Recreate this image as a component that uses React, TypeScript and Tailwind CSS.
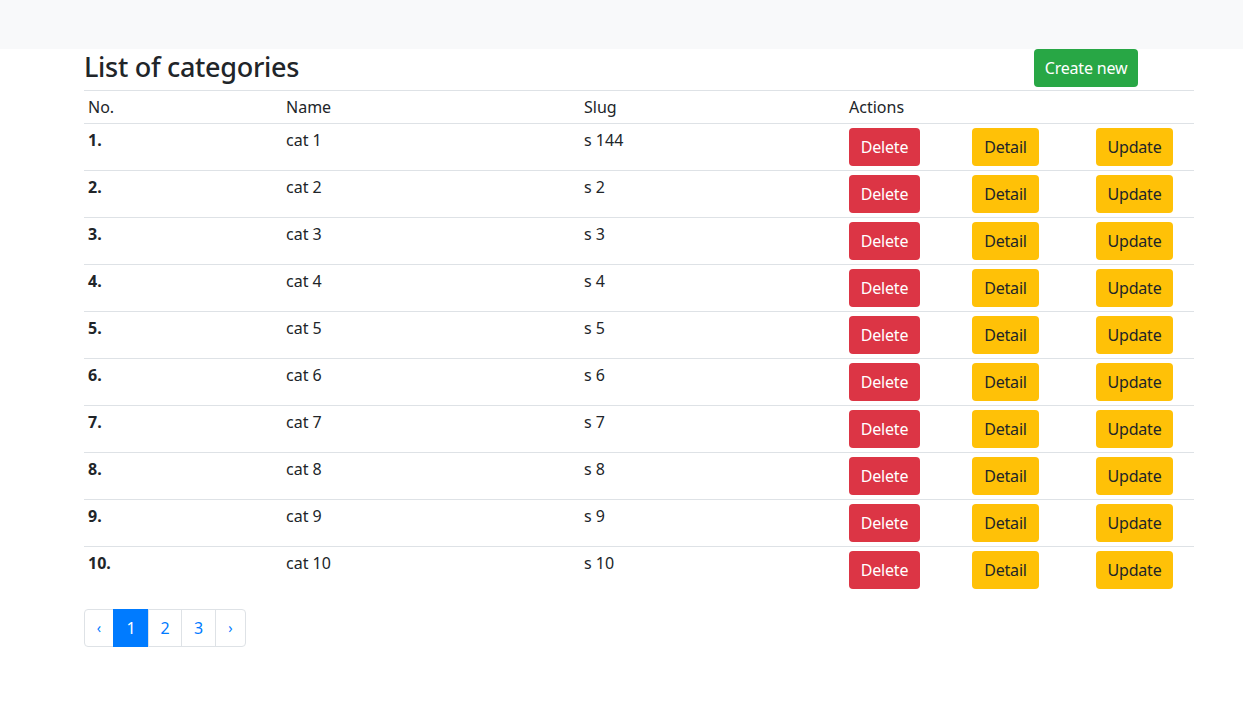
import React from 'react';

const rows = [
  { no: 1, name: 'cat 1', slug: 's 144' },
  { no: 2, name: 'cat 2', slug: 's 2' },
  { no: 3, name: 'cat 3', slug: 's 3' },
  { no: 4, name: 'cat 4', slug: 's 4' },
  { no: 5, name: 'cat 5', slug: 's 5' },
  { no: 6, name: 'cat 6', slug: 's 6' },
  { no: 7, name: 'cat 7', slug: 's 7' },
  { no: 8, name: 'cat 8', slug: 's 8' },
  { no: 9, name: 'cat 9', slug: 's 9' },
  { no: 10, name: 'cat 10', slug: 's 10' },
];

const btn = 'h-[38px] rounded-[4px] text-center text-base leading-6 tracking-[-0.2px]';

const App: React.FC = () => {
  return (
    <div className="min-h-screen bg-white text-[#212529] font-['Noto_Sans',sans-serif] text-base leading-6">
      <nav className="h-[49px] bg-[#f8f9fa]"></nav>
      <div className="ml-[84px] w-[1110px]">
        <div className="flex h-[41px] items-start justify-between">
          <h3 className="mt-[1px] text-[27px] font-medium leading-[34px] tracking-[-0.3px]">List of categories</h3>
          <button className={`${btn} mr-[56px] w-[104px] bg-[#28a745] text-white`}>Create new</button>
        </div>
        <table className="w-full table-fixed border-collapse">
          <colgroup>
            <col className="w-[198px]" />
            <col className="w-[298px]" />
            <col className="w-[265px]" />
            <col className="w-[123px]" />
            <col className="w-[124px]" />
            <col className="w-[102px]" />
          </colgroup>
          <thead>
            <tr className="border-t border-b border-[#dee2e6]">
              <th className="p-1 text-left font-normal">No.</th>
              <th className="p-1 text-left font-normal">Name</th>
              <th className="p-1 text-left font-normal">Slug</th>
              <th className="p-1 text-left font-normal" colSpan={3}>Actions</th>
            </tr>
          </thead>
          <tbody>
            {rows.map((r, i) => (
              <tr key={r.no} className={i > 0 ? 'border-t border-[#dee2e6]' : ''}>
                <td className="p-1 align-top font-bold">{r.no}.</td>
                <td className="p-1 align-top">{r.name}</td>
                <td className="p-1 align-top">{r.slug}</td>
                <td className="p-1 align-top">
                  <button className={`${btn} w-[71px] bg-[#dc3545] text-white`}>Delete</button>
                </td>
                <td className="p-1 align-top">
                  <button className={`${btn} w-[67px] bg-[#ffc107] text-[#212529]`}>Detail</button>
                </td>
                <td className="p-1 align-top">
                  <button className={`${btn} w-[77px] bg-[#ffc107] text-[#212529]`}>Update</button>
                </td>
              </tr>
            ))}
          </tbody>
        </table>
        <ul className="mt-4 flex h-[38px] w-fit text-[#007bff]">
          <li className="flex w-[30px] items-center justify-center rounded-l-[4px] border border-[#dee2e6] text-sm">‹</li>
          <li className="-ml-px flex w-[36px] items-center justify-center border border-[#007bff] bg-[#007bff] text-white">1</li>
          <li className="-ml-px flex w-[34px] items-center justify-center border border-[#dee2e6]">2</li>
          <li className="-ml-px flex w-[35px] items-center justify-center border border-[#dee2e6]">3</li>
          <li className="-ml-px flex w-[31px] items-center justify-center rounded-r-[4px] border border-[#dee2e6] text-sm">›</li>
        </ul>
      </div>
    </div>
  );
};

export default App;
